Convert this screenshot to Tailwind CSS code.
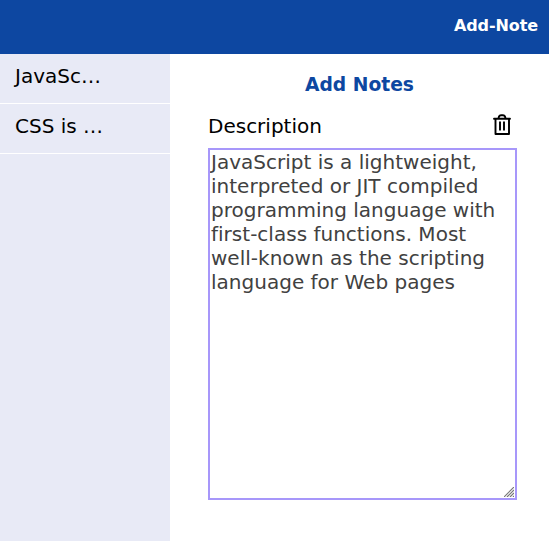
<!DOCTYPE html>
<html lang="en">
<head>
<meta charset="utf-8">
<title>Notes</title>
<script src="https://cdn.jsdelivr.net/npm/@tailwindcss/browser@4"></script>
</head>
<body class="h-screen flex flex-col overflow-hidden bg-white text-black font-['DejaVu_Sans',sans-serif]">
<header class="h-[54px] shrink-0 bg-[#0d47a1] text-white flex items-center justify-end pr-[11px]">
<button class="text-base leading-6 font-bold tracking-[-0.1px] -mt-0.5">Add-Note</button>
</header>
<div class="flex flex-1 min-h-0">
<aside class="w-[170px] shrink-0 bg-[#e8eaf6]">
<ul class="text-[20px] leading-6">
<li class="h-[50px] border-b border-white pl-[15px] pt-[10px]">JavaSc…</li>
<li class="h-[50px] border-b border-white pl-[15px] pt-[10px]">CSS is …</li>
</ul>
</aside>
<main class="flex-1 pl-[38px] pr-8 pt-5">
<h1 class="text-center text-[18.72px] leading-[22px] font-bold text-[#0d47a1] -ml-1.5">Add Notes</h1>
<div class="flex justify-between mt-[18px] h-[34px] text-[20px] leading-6">
<label for="description">Description</label>
<button aria-label="Delete note" class="w-6 h-6 mr-[3px] -mt-px">
<svg viewBox="0 0 24 24" class="w-6 h-6" fill="none" stroke="#000" stroke-width="1.9" stroke-linejoin="round"><path stroke-linecap="round" d="M4 5.7H20"/><path d="M5.5 6V21H19V6M8.5 5.5L9 3.5Q9.6 2.2 11 2.2h2Q14.4 2.2 15 3.5L15.5 5.5M10 8.5v9M14 8.5v9"/></svg>
</button>
</div>
<div class="relative w-[309px]">
<textarea id="description" class="block w-full h-[352px] resize-none border-2 border-[#a797fa] p-[2px] pl-px pt-0 text-[20px] leading-6 tracking-[0.01px] text-[#414141] outline-none">JavaScript is a lightweight, interpreted or JIT compiled programming language with first-class functions. Most well-known as the scripting language for Web pages</textarea>
<svg class="absolute right-[3px] bottom-[3px] w-[10px] h-[10px]" viewBox="0 0 10 10" fill="none" stroke="#777" stroke-width="1.2"><path d="M0 10L10 0M3 10L10 3M6 10L10 6M9 10L10 9"/></svg>
</div>
</main>
</div>
</body>
</html>
